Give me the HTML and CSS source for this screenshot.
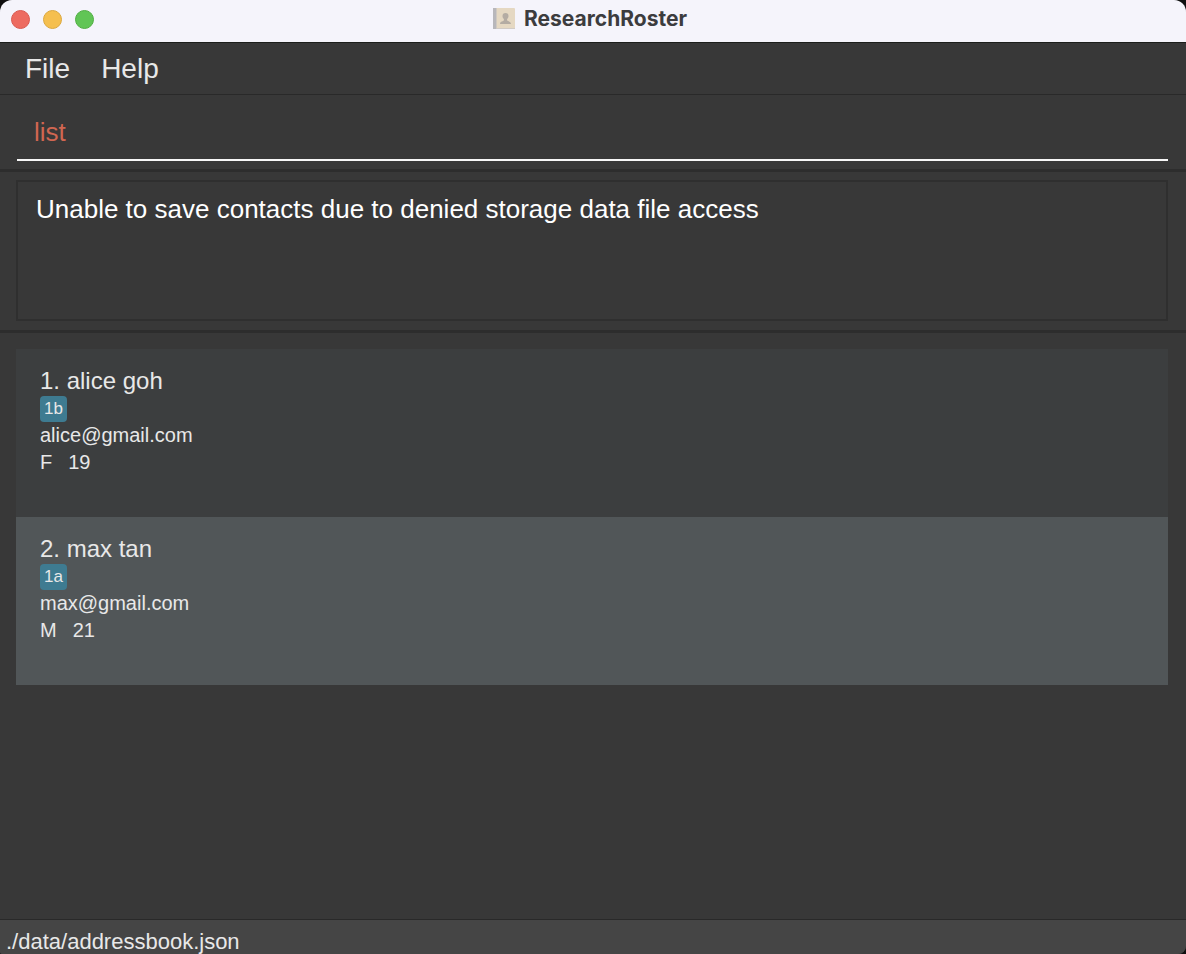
FILE: index.html
```html
<!DOCTYPE html>
<html lang="en">
<head>
<meta charset="utf-8">
<meta name="viewport" content="width=device-width, initial-scale=1">
<title>ResearchRoster</title>
<link rel="stylesheet" href="styles.css">
</head>
<body>
<div class="window">
  <header class="titlebar">
    <div class="controls">
      <button class="control close" type="button" aria-label="Close"></button>
      <button class="control minimize" type="button" aria-label="Minimize"></button>
      <button class="control zoom" type="button" aria-label="Zoom"></button>
    </div>
    <h1 class="title">
      <svg class="app-icon" viewBox="0 0 24 22" aria-hidden="true">
        <rect x="1" y="0" width="22" height="21" rx="1" fill="#e5d8c2"/>
        <rect x="1" y="20" width="22" height="1" fill="#d1cbc5"/>
        <path d="M1 0h4v21H1z" fill="#b8b7bb"/>
        <path d="M4 0h1v21H4z" fill="#cfc8c0"/>
        <path d="M13.500 5c2 0 3 1.300 3 3.100 0 1.300-.6 2.300-1.400 3v1.200c.3 1.100 3.800.9 3.900 3.700H8c.1-2.800 3.600-2.600 3.900-3.700v-1.200c-.8-.7-1.400-1.700-1.400-3C10.500 6.300 11.500 5 13.500 5z" fill="#b4aca3"/>
      </svg>
      <span>ResearchRoster</span>
    </h1>
  </header>
  <nav class="menubar">
    <button class="menu" type="button">File</button>
    <button class="menu" type="button">Help</button>
  </nav>
  <form class="command-pane">
    <input class="command" type="text" value="list" aria-label="Command" spellcheck="false">
  </form>
  <section class="result-pane">
    <textarea class="result" aria-label="Result" readonly spellcheck="false">Unable to save contacts due to denied storage data file access</textarea>
  </section>
  <main class="list-pane">
    <ul class="people">
      <li class="person">
        <h2 class="name">1. alice goh</h2>
        <span class="tag">1b</span>
        <p class="detail">alice@gmail.com</p>
        <p class="detail pair"><span>F</span><span>19</span></p>
      </li>
      <li class="person">
        <h2 class="name">2. max tan</h2>
        <span class="tag">1a</span>
        <p class="detail">max@gmail.com</p>
        <p class="detail pair"><span>M</span><span>21</span></p>
      </li>
    </ul>
  </main>
  <footer class="status">./data/addressbook.json</footer>
</div>
</body>
</html>
```
FILE: styles.css
```css
* {
  box-sizing: border-box;
}

body {
  margin: 0;
  background: #101010;
  color: #e8e8e8;
  font-family: "Liberation Sans", Arial, sans-serif;
}

h1, h2, p, ul {
  margin: 0;
  padding: 0;
}

button, input, textarea {
  font: inherit;
  color: inherit;
  background: transparent;
  border: 0;
  margin: 0;
  outline: 0;
}

.window {
  display: flex;
  flex-direction: column;
  min-height: 100vh;
  background: #383838;
  border-radius: 12px 12px 8px 2px;
  overflow: hidden;
}

.titlebar {
  display: grid;
  grid-template-columns: 1fr auto 1fr;
  align-items: center;
  height: 43px;
  padding: 0 18px 4px 11px;
  background: #f5f4fb;
  border-bottom: 1px solid #1c1e1b;
}

.controls {
  display: flex;
  gap: 13px;
}

.control {
  width: 19px;
  height: 19px;
  padding: 0;
  border-radius: 50%;
}

.close {
  background: #ed6b60;
  border: 1px solid #d9594f;
}

.minimize {
  background: #f5bf4f;
  border: 1px solid #dba83f;
}

.zoom {
  background: #61c555;
  border: 1px solid #51ae43;
}

.title {
  display: flex;
  align-items: center;
  gap: 8px;
  font-family: Inter, "Liberation Sans", sans-serif;
  font-size: 21px;
  line-height: 28px;
  font-weight: 700;
  color: #3c3c3e;
}

.app-icon {
  width: 24px;
  height: 22px;
}

.menubar {
  display: flex;
  gap: 31px;
  height: 52px;
  padding: 0 25px;
  border-bottom: 1px solid #292929;
}

.menu {
  padding: 0;
  font-size: 28px;
  line-height: 50px;
}

.command-pane {
  height: 77px;
  padding: 8px 18px 9px 17px;
  border-bottom: 3px solid #2d2d2d;
}

.command {
  display: block;
  width: 100%;
  height: 58px;
  padding: 2px 17px 0;
  border-bottom: 2px solid #f7f7f7;
  font-size: 26px;
  color: #d06651;
}

.result-pane {
  padding: 8px 18px 9px 16px;
  border-bottom: 3px solid #2d2d2d;
}

.result {
  display: block;
  width: 100%;
  height: 141px;
  padding: 11px 18px;
  border: 2px solid #2f2f2f;
  resize: none;
  overflow: auto;
  font-size: 26px;
  line-height: 32px;
  color: #ffffff;
}

.list-pane {
  flex: 1;
  padding: 16px 18px 16px 16px;
}

.people {
  list-style: none;
}

.person {
  padding: 16px 24px 41px;
  background: #3c3e3f;
}

.person:nth-child(even) {
  background: #515658;
}

.name {
  font-size: 24px;
  line-height: 31px;
  font-weight: 400;
}

.tag {
  display: block;
  width: fit-content;
  padding: 0 4px;
  border-radius: 4px;
  background: #3e7b91;
  font-size: 17px;
  line-height: 26px;
}

.detail {
  font-size: 20px;
  line-height: 27px;
}

.pair {
  display: flex;
  gap: 16px;
}

.status {
  height: 35px;
  padding: 6px 6px 0;
  border-top: 1px solid #292929;
  background: #454545;
  font-size: 22px;
  line-height: 32px;
}
```
